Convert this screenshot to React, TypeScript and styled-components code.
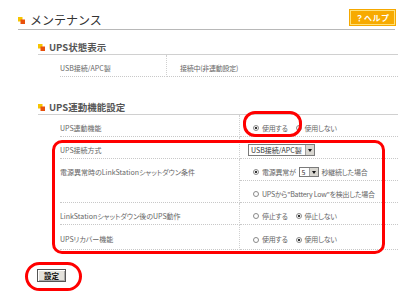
import React from "react";
import styled, { createGlobalStyle } from "styled-components";

const Global = createGlobalStyle`
  html, body { margin: 0; padding: 0; background: #fff; }
  body { font-family: "Noto Sans CJK JP", "Noto Sans", sans-serif; color: #666; }
`;

const Page = styled.div`
  position: relative;
  width: 413px;
  height: 292px;
  padding: 10px 18px 0 18px;
  box-sizing: border-box;
  overflow: hidden;
`;

const Header = styled.div`
  display: flex;
  align-items: center;
  justify-content: space-between;
  width: 377px;
  height: 19px;
  border-bottom: 1px solid #b8b8b8;
`;

const Title = styled.h1`
  display: flex;
  align-items: center;
  gap: 5px;
  margin: 0;
  font-size: 12px;
  font-weight: normal;
  color: #333;
  line-height: 14px;
  padding-top: 1px;
`;

const HelpButton = styled.button`
  width: 45px;
  height: 15px;
  margin-top: -4px;
  padding: 0;
  border: 1px solid #ffe27a;
  outline: 1px solid #f5a800;
  background: #f7aa00;
  color: #fff;
  font-family: "Noto Sans CJK JP", sans-serif;
  font-size: 8px;
  font-weight: bold;
  letter-spacing: 0.5px;
  line-height: 12px;
`;

const Section = styled.section<{ $top: number }>`
  margin: ${(p) => p.$top}px 0 0 20px;
  width: 360px;
`;

const SectionHead = styled.h2`
  display: flex;
  align-items: center;
  gap: 4px;
  margin: 0;
  height: 13px;
  border-bottom: 1px solid #d0d0d0;
  font-size: 9.5px;
  font-weight: bold;
  color: #555;
  line-height: 11px;
`;

const Table = styled.div<{ $labelWidth: number }>`
  display: grid;
  grid-template-columns: ${(p) => p.$labelWidth}px 1fr;
  margin-left: 22px;
  font-feature-settings: "palt";
`;

const Label = styled.div<{ $span?: number; $h?: number }>`
  grid-row: span ${(p) => p.$span ?? 1};
  display: flex;
  align-items: ${(p) => (p.$span ? "flex-start" : "center")};
  height: ${(p) => p.$h ?? 22}px;
  padding-top: ${(p) => (p.$span ? 9 : 5)}px;
  box-sizing: border-box;
  border-bottom: 1px dotted #c8c8c8;
  border-right: 1px dotted #d0d0d0;
  font-size: 7px;
  line-height: 9px;
  color: #666;
  white-space: nowrap;
`;

const Value = styled.div<{ $indent?: number; $h?: number }>`
  display: flex;
  align-items: center;
  gap: 3px;
  height: ${(p) => p.$h ?? 22}px;
  padding: 5px 0 0 ${(p) => p.$indent ?? 13}px;
  box-sizing: border-box;
  border-bottom: 1px dotted #c8c8c8;
  font-size: 7px;
  line-height: 9px;
  letter-spacing: -0.25px;
  color: #666;
  white-space: nowrap;
`;

const Option = styled.label`
  display: inline-flex;
  align-items: center;
  gap: 3px;
  margin-right: 5px;
`;

const Radio = styled.input.attrs({ type: "radio", readOnly: true })`
  appearance: none;
  margin: 0;
  width: 6px;
  height: 6px;
  border: 1px solid #8a8a8a;
  border-radius: 50%;
  background: #fff;
  box-sizing: border-box;
  &:checked {
    background: radial-gradient(circle, #333 0 1.2px, #fff 1.6px);
  }
`;

const SelectBox = styled.span<{ $w: number; $h: number }>`
  display: inline-flex;
  align-items: stretch;
  width: ${(p) => p.$w}px;
  height: ${(p) => p.$h}px;
  box-sizing: border-box;
  border: 1px solid #7a7a7a;
  background: #fff;
  color: #333;
  font-size: 7px;
  letter-spacing: 0;
  line-height: ${(p) => p.$h - 2}px;
`;

const SelectText = styled.span`
  flex: 1;
  padding-left: 2px;
  overflow: hidden;
`;

const SelectArrow = styled.span`
  width: 8px;
  background: #d8d6d0;
  border-left: 1px solid #a0a0a0;
  display: flex;
  align-items: center;
  justify-content: center;
  &::after {
    content: "";
    border-left: 2.5px solid transparent;
    border-right: 2.5px solid transparent;
    border-top: 3px solid #111;
  }
`;

const SubmitButton = styled.button`
  margin: 19px 0 0 19px;
  width: 29px;
  height: 13px;
  padding: 0;
  border: 1px solid #555;
  box-shadow: inset 1px 1px 0 #fff, inset -1px -1px 0 #aaa;
  background: #e4e2dc;
  font-family: "Noto Sans CJK JP", sans-serif;
  font-size: 7.5px;
  font-weight: bold;
  color: #111;
  line-height: 10px;
`;

const Mark = styled.div<{ $x: number; $y: number; $w: number; $h: number; $r: string }>`
  position: absolute;
  left: ${(p) => p.$x}px;
  top: ${(p) => p.$y}px;
  width: ${(p) => p.$w}px;
  height: ${(p) => p.$h}px;
  box-sizing: border-box;
  border: 3px solid #ff0000;
  border-radius: ${(p) => p.$r};
  pointer-events: none;
`;

const Bullet = () => (
  <svg width="7" height="7" viewBox="0 0 7 7" aria-hidden>
    <rect x="0" y="0" width="4.5" height="4.5" fill="#f7c400" />
    <rect x="2.5" y="2.5" width="4.5" height="4.5" fill="#e8500c" />
  </svg>
);

const Select = ({ text, w, h }: { text: string; w: number; h: number }) => (
  <SelectBox $w={w} $h={h}>
    <SelectText>{text}</SelectText>
    <SelectArrow />
  </SelectBox>
);

export default function App() {
  return (
    <>
      <Global />
      <Page>
        <Header>
          <Title>
            <Bullet />
            メンテナンス
          </Title>
          <HelpButton>？ヘルプ</HelpButton>
        </Header>

        <Section $top={11}>
          <SectionHead>
            <Bullet />
            UPS状態表示
          </SectionHead>
          <Table $labelWidth={107}>
            <Label>USB接続/APC製</Label>
            <Value>接続中(非連動設定)</Value>
          </Table>
        </Section>

        <Section $top={24}>
          <SectionHead>
            <Bullet />
            UPS連動機能設定
          </SectionHead>
          <Table $labelWidth={180}>
            <Label>UPS連動機能</Label>
            <Value>
              <Option><Radio name="a" defaultChecked />使用する</Option>
              <Option><Radio name="a" />使用しない</Option>
            </Value>

            <Label>UPS接続方式</Label>
            <Value $indent={8}>
              <Select text="USB接続/APC製" w={67} h={12} />
            </Value>

            <Label $span={2} $h={44}>電源異常時のLinkStationシャットダウン条件</Label>
            <Value>
              <Radio name="b" defaultChecked />
              電源異常が
              <Select text="5" w={20} h={10} />
              秒継続した場合
            </Value>
            <Value>
              <Radio name="b" />
              UPSから"Battery Low"を検出した場合
            </Value>

            <Label>LinkStationシャットダウン後のUPS動作</Label>
            <Value>
              <Option><Radio name="c" />停止する</Option>
              <Option><Radio name="c" defaultChecked />停止しない</Option>
            </Value>

            <Label $h={25}>UPSリカバー機能</Label>
            <Value $h={25}>
              <Option><Radio name="d" />使用する</Option>
              <Option><Radio name="d" defaultChecked />使用しない</Option>
            </Value>
          </Table>
        </Section>

        <SubmitButton>設定</SubmitButton>

        <Mark $x={243} $y={111} $w={59} $h={26} $r="12px" />
        <Mark $x={52} $y={140} $w={333} $h={114} $r="10px" />
        <Mark $x={25} $y={262} $w={57} $h={29} $r="15px" />
      </Page>
    </>
  );
}
